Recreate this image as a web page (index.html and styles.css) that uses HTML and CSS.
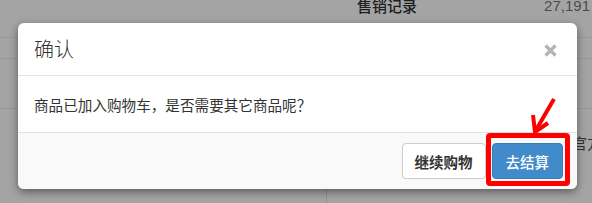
FILE: index.html
```html
<!DOCTYPE html>
<html>
<head>
	<meta charset="utf-8">
	<title>确认</title>
	<link rel="stylesheet" href="styles.css">
</head>
<body>

	<div class="page">
		<div class="sales-row">
			<span class="sales-label">售销记录</span>
			<span class="sales-num">27,191</span>
		</div>
		<div class="row-2"></div>
		<div class="row-3"></div>
		<div class="row-4"><span class="official">官方</span></div>
		<div class="row-5">
			<div class="col-left"></div>
			<div class="col-right"></div>
		</div>
	</div>

	<div class="modal">
		<div class="modal-header">
			<h4 class="modal-title">确认</h4>
			<span class="close">
				<svg width="13" height="13" viewBox="0 0 13 13">
					<path d="M1.5 1.5 L11.5 11.5 M11.5 1.5 L1.5 11.5" stroke="#b4b4b4" stroke-width="3.2"/>
				</svg>
			</span>
		</div>
		<div class="modal-body">商品已加入购物车，是否需要其它商品呢？</div>
		<div class="modal-footer">
			<button class="btn btn-default">继续购物</button>
			<button class="btn btn-primary">去结算</button>
		</div>
		<span class="highlight"></span>
	</div>

	<svg class="arrow" width="32" height="42" viewBox="0 0 32 42">
		<path d="M26 3 L8 34" stroke="#f00" stroke-width="4" fill="none"/>
		<path d="M5 19 L7 36 L20 27" stroke="#f00" stroke-width="4" fill="none" stroke-linejoin="miter"/>
	</svg>

</body>
</html>
```

FILE: styles.css
```css
* {
	margin: 0;
	padding: 0;
	box-sizing: border-box;
}

html {
	font-family: "Noto Sans CJK SC", "Liberation Sans", sans-serif;
}

body {
	width: 592px;
	height: 203px;
	overflow: hidden;
	background-color: #a4a4a4;
	position: relative;
}

/* page behind the overlay */
.page {
	width: 100%;
	height: 100%;
}

.sales-row {
	height: 38px;
	border-bottom: 1px solid #989898;
	display: flex;
	align-items: flex-start;
}

.sales-label {
	margin-left: 357px;
	margin-top: -3px;
	font-size: 15px;
	line-height: 18px;
	font-weight: 500;
	color: #1e1e1e;
}

.sales-num {
	margin-left: auto;
	margin-right: 2px;
	margin-top: -3px;
	font-family: "Liberation Sans", sans-serif;
	font-size: 15px;
	line-height: 18px;
	color: #4c4c4c;
}

.row-2 {
	height: 21px;
	border-bottom: 1px solid #989898;
}

.row-3 {
	height: 50px;
	border-bottom: 1px solid #989898;
}

.row-4 {
	height: 52px;
	padding-left: 572px;
	padding-top: 25px;
}

.official {
	display: block;
	white-space: nowrap;
	font-size: 15px;
	line-height: 18px;
	color: #333;
}

.row-5 {
	display: flex;
	height: 42px;
}

.col-left {
	width: 327px;
	border-right: 1px solid #929292;
}

/* dialog */
.modal {
	position: absolute;
	left: 18px;
	top: 23px;
	width: 559px;
	background-color: #fff;
	border-radius: 6px;
	box-shadow: 0 3px 9px rgba(0, 0, 0, .45);
	overflow: hidden;
}

.modal-header {
	height: 53px;
	border-bottom: 1px solid #e5e5e5;
	display: flex;
	align-items: center;
	padding: 0 20px 0 16px;
}

.modal-title {
	font-size: 20px;
	line-height: 22px;
	font-weight: 300;
	color: #333;
}

.close {
	margin-left: auto;
	display: flex;
	margin-top: 2px;
}

.modal-body {
	height: 56px;
	display: flex;
	align-items: center;
	padding-left: 16px;
	font-size: 14.6px;
	color: #333;
}

.modal-footer {
	height: 57px;
	border-top: 1px solid #e2e2e2;
	background-color: #f9f9f9;
	display: flex;
	justify-content: flex-end;
	align-items: center;
	gap: 6px;
	padding-right: 14px;
}

.btn {
	height: 36px;
	border-radius: 4px;
	font-family: "Noto Sans CJK SC", sans-serif;
	font-size: 14.5px;
	font-weight: 700;
	cursor: pointer;
}

.btn-default {
	padding: 0 12px;
	background-color: #fff;
	border: 1px solid #ccc;
	color: #333;
}

.btn-primary {
	padding: 0 13px;
	background-color: #428bca;
	border: 1px solid #357ebd;
	color: #fff;
	font-weight: 500;
}

.highlight {
	position: absolute;
	left: 468px;
	top: 110px;
	width: 84px;
	height: 53px;
	border: 5px solid #f00;
	border-radius: 4px;
}

.arrow {
	position: absolute;
	left: 528px;
	top: 96px;
}
```
